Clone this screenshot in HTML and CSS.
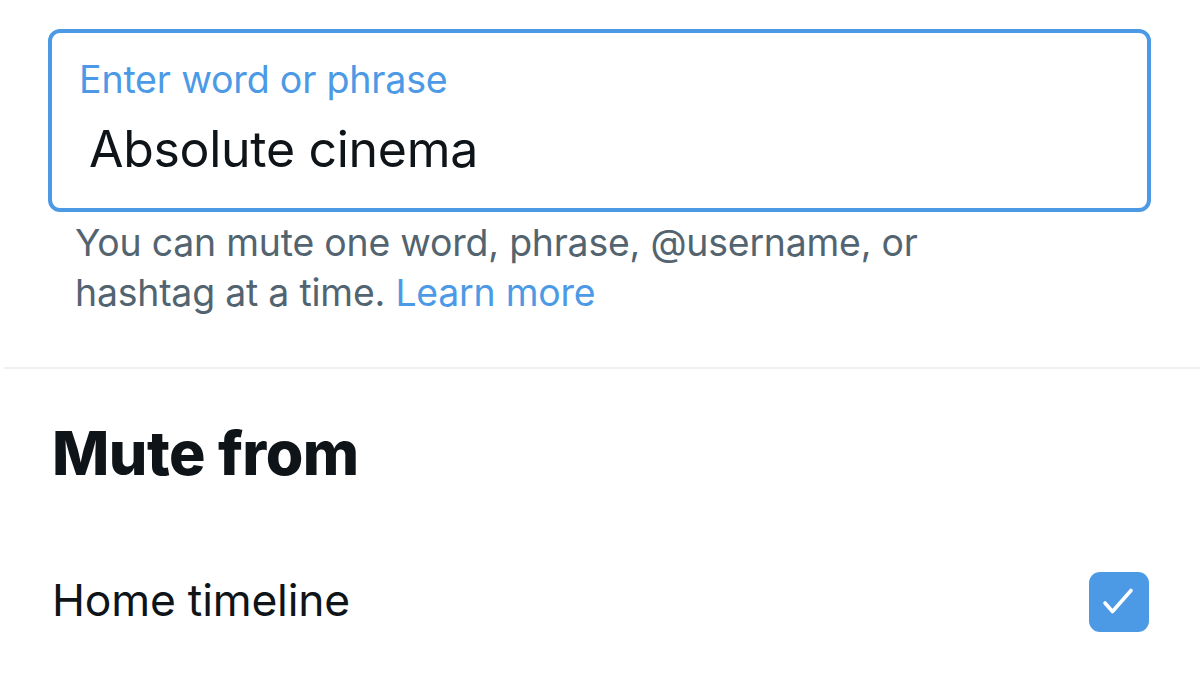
FILE: index.html
```html
<!DOCTYPE html>
<html lang="en">
<head>
<meta charset="utf-8">
<title>Muted words</title>
<link rel="stylesheet" href="styles.css">
</head>
<body>
<main class="page">
  <section class="entry">
    <div class="field">
      <div class="field-label">Enter word or phrase</div>
      <div class="field-value">Absolute cinema</div>
    </div>
    <p class="hint">You can mute one word, phrase, @username, or<br>hashtag at a time. <a class="link" href="#">Learn more</a></p>
  </section>
  <hr class="divider">
  <section class="mute">
    <h2 class="mute-title">Mute from</h2>
    <div class="row">
      <span class="row-label">Home timeline</span>
      <span class="checkbox">
        <svg viewBox="0 0 60 60" width="60" height="60"><path d="M16 31 L23.5 39.5 L42 18.5" fill="none" stroke="#fff" stroke-width="3.6" stroke-linecap="round" stroke-linejoin="round"/></svg>
      </span>
    </div>
  </section>
</main>
</body>
</html>
```

FILE: styles.css
```css
html, body {
  margin: 0;
  padding: 0;
  background: #ffffff;
}
body {
  font-family: Inter, "Noto Sans", "Liberation Sans", sans-serif;
  color: #0f1419;
  width: 1200px;
  height: 685px;
  overflow: hidden;
}
.page {
  display: flex;
  flex-direction: column;
}
.entry {
  padding: 29px 49px 0 48px;
}
.field {
  border: 4px solid #4c9ae6;
  border-radius: 12px;
  box-sizing: border-box;
  height: 183px;
  padding: 25px 0 0 27px;
}
.field-label {
  color: #4c9ae6;
  font-size: 37.6px;
  line-height: 44px;
  letter-spacing: -0.2px;
}
.field-value {
  font-size: 50px;
  line-height: 58px;
  margin-top: 18px;
  padding-left: 10px;
  letter-spacing: -0.3px;
}
.hint {
  margin: 6px 0 0 27px;
  color: #536471;
  font-size: 37.4px;
  line-height: 50px;
  letter-spacing: -0.2px;
}
.link {
  color: #4c9ae6;
  text-decoration: none;
}
.divider {
  border: none;
  height: 2px;
  background: #eff1f3;
  margin: 49px 0 0 4px;
}
.mute {
  padding: 0 51px 0 52px;
}
.mute-title {
  margin: 49px 0 0;
  font-size: 60.8px;
  line-height: 70px;
  font-weight: 800;
  letter-spacing: -0.5px;
}
.row {
  display: flex;
  align-items: center;
  justify-content: space-between;
  margin-top: 82px;
}
.row-label {
  font-size: 44.4px;
  line-height: 60px;
  letter-spacing: -0.2px;
  padding-bottom: 4px;
}
.checkbox {
  width: 60px;
  height: 60px;
  border-radius: 11px;
  background: #4c9ae6;
  display: flex;
}
```
